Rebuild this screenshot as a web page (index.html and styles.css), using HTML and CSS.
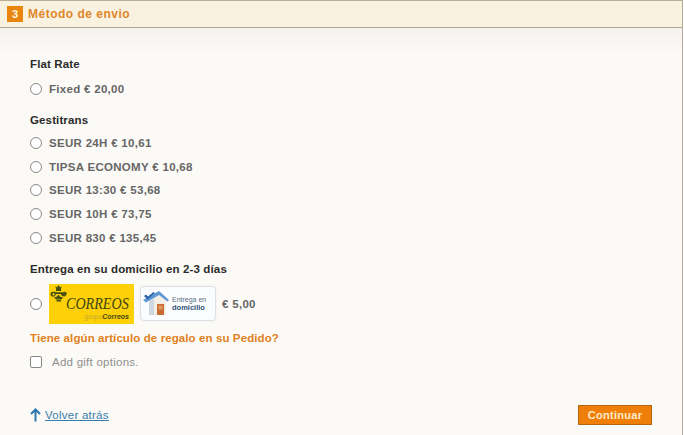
FILE: index.html
```html
<!DOCTYPE html>
<html lang="es">
<head>
<meta charset="utf-8">
<title>Método de envío</title>
<link rel="stylesheet" href="styles.css">
</head>
<body>
<section class="panel">
  <header class="step-head">
    <span class="step-num">3</span>
    <h2 class="step-title">Método de envio</h2>
  </header>
  <div class="step-body">
    <h3 class="carrier first">Flat Rate</h3>
    <label class="rate"><span class="radio"></span>Fixed € 20,00</label>
    <h3 class="carrier second">Gestitrans</h3>
    <div class="rate-list">
      <label class="rate"><span class="radio"></span>SEUR 24H € 10,61</label>
      <label class="rate"><span class="radio"></span>TIPSA ECONOMY € 10,68</label>
      <label class="rate"><span class="radio"></span>SEUR 13:30 € 53,68</label>
      <label class="rate"><span class="radio"></span>SEUR 10H € 73,75</label>
      <label class="rate"><span class="radio"></span>SEUR 830 € 135,45</label>
    </div>
    <h3 class="carrier third">Entrega en su domicilio en 2-3 días</h3>
    <label class="rate logo-rate">
      <span class="radio"></span>
      <span class="correos">
        <svg class="crown" width="18" height="17" viewBox="0 0 18 17" aria-hidden="true">
          <g fill="#47500f">
            <path d="M6 3.500 5.200 1.500 7 2.300 8.500 0l1.500 2.300 1.800-.8L11 3.500v2.500H6z"/>
            <path d="M8 10c-.9 2-3 2.600-4.400 1.600L6 14.500h5.500l1.800-2.500c-1.900.6-3.600-.1-4.300-2z"/>
            <path d="M3.300 6.800C1.500 6.800.3 8 .5 9.500c.2 1.500 1.500 2.400 3 2.100 1.300-.2 2.300-1.200 2.500-2.500h4.800c.6 1.700 2.400 2.800 4.100 2.100 1.500-.6 2.300-2.200 1.500-3.600-.7-1.100-2.100-1.100-3-.4H6C5.500 7.100 4.400 6.700 3.300 6.800zM3.500 8.300c.8 0 1.300.5 1.200 1.200-.1.600-.7 1-1.300.9-.7-.1-1.200-.6-1.100-1.200.1-.5.600-.9 1.200-.9z" fill-rule="evenodd"/>
            <path d="M6.500 15h4.500v1.500H6.500z"/>
          </g>
        </svg>
        <span class="correos-name">CORREOS</span>
        <span class="correos-group"><span class="grupo">grupo</span><b>Correos</b></span>
      </span>
      <span class="home-card">
        <svg width="26" height="25" viewBox="0 0 26 25" aria-hidden="true">
          <path d="M6 9 16 2l7 7v15H6z" fill="#f4efe6"/>
          <path d="M6 10l5-2v16H6z" fill="#cfd8e0"/>
          <path d="M14 13h7v11h-7z" fill="#c96a33"/>
          <path d="M15.500 14.500h4v4h-4z" fill="#e09a68"/>
          <path d="M0 9 16 0l10 9-1.500 1.500L16 4 3 11.500z" fill="#5f97d3"/>
          <path d="M1 5l3.500 3.500L12 2l-1.500-1L5 5.500 3 3.500z" fill="#2b64ad"/>
        </svg>
        <span class="home-text"><span class="home-top">Entrega en</span><b class="home-bottom">domicilio</b></span>
      </span>
      <span class="logo-price">€ 5,00</span>
    </label>
    <h3 class="gift-title">Tiene algún artículo de regalo en su Pedido?</h3>
    <label class="gift"><span class="check"></span>Add gift options.</label>
    <footer class="actions">
      <a class="back" href="#">
        <svg width="11" height="14" viewBox="0 0 11 14" aria-hidden="true"><path d="M5.500 13.500V2M1 6l4.500-4.500L10 6" fill="none" stroke="#2a7ab0" stroke-width="2"/></svg>
        <span class="back-text">Volver atrás</span>
      </a>
      <button class="continue" type="button">Continuar</button>
    </footer>
  </div>
</section>
</body>
</html>
```
FILE: styles.css
```css
html, body { margin: 0; padding: 0; background: #fff; }
body { width: 684px; height: 435px; overflow: hidden; font-family: "Liberation Sans", Arial, sans-serif; }
.panel { width: 682px; height: 435px; border-right: 1px solid #b5ac98; background: #fbfaf6; }
.step-head {
  height: 26px;
  display: flex; align-items: center; gap: 5px; padding-left: 7px;
  border-top: 1px solid #b9ae97; border-bottom: 1px solid #b0a68f;
  background: #f9f2e1;
}
.step-num { width: 16px; height: 16px; background: #e8860f; color: #fff6e4; font-size: 11px; font-weight: 700; text-align: center; line-height: 16px; }
.step-title { margin: 0; color: #e0862a; font-size: 12px; font-weight: 700; letter-spacing: .5px; }
.step-body {
  height: 407px; padding: 30px 30px 0; box-sizing: border-box;
  background: linear-gradient(#f3f2ee 0, #fbfaf6 26px);
  display: flex; flex-direction: column;
}
.carrier { margin: 0; font-size: 11.500px; line-height: 13px; font-weight: 700; color: #2b2b2b; letter-spacing: .13px; }
.second { margin-top: 19px; }
.third { margin-top: 19px; }
.rate { display: flex; align-items: center; height: 13px; color: #666; font-size: 11.500px; font-weight: 700; letter-spacing: .3px; }
.first + .rate { margin-top: 11px; }
.rate-list { display: flex; flex-direction: column; gap: 10.750px; margin-top: 9.300px; }
.radio { flex: none; width: 10px; height: 10px; margin-right: 7px; border: 1px solid #888; border-radius: 50%; background: #fff; }
.logo-rate { height: 40px; margin-top: 7.700px; }
.logo-rate .radio { margin-right: 7px; }
.correos { flex: none; position: relative; width: 85px; height: 40px; background: #fdd007; overflow: hidden; }
.crown { position: absolute; left: 1px; top: 1px; }
.correos-name { position: absolute; left: 17px; top: 10px; font-family: "Liberation Serif", serif; font-style: italic; font-weight: 400; font-size: 17px; line-height: 20px; letter-spacing: 0; color: #3b4412; transform: scaleX(.83); transform-origin: left center; }
.correos-group { position: absolute; right: 5px; bottom: 3px; font-size: 7px; line-height: 8px; letter-spacing: 0; font-weight: 400; color: #c9a92e; }
.correos-group b { color: #47450f; font-style: italic; }
.home-card { flex: none; display: flex; align-items: center; gap: 3px; box-sizing: border-box; width: 76px; height: 35px; margin-left: 6px; padding-left: 2px; border: 1px solid #dde1e7; border-radius: 4px; background: #fbfcfd; box-shadow: 0 0 2px #e6e6e6; }
.home-text { display: flex; flex-direction: column; font-size: 7px; line-height: 8px; letter-spacing: 0; color: #5d7288; font-weight: 400; }
.home-bottom { color: #2f5478; font-size: 7.500px; }
.logo-price { margin-left: 6px; }
.gift-title { margin: 8px 0 0; color: #e08020; font-size: 11.500px; line-height: 13px; font-weight: 700; letter-spacing: .1px; }
.gift { display: flex; align-items: center; margin-top: 11px; height: 13px; color: #8f8f8f; font-size: 11.500px; letter-spacing: .25px; }
.check { flex: none; width: 10px; height: 10px; margin-right: 10px; border: 1px solid #888; border-radius: 2px; background: #fff; }
.actions { display: flex; align-items: center; justify-content: space-between; margin-top: 36px; }
.back { display: flex; align-items: center; gap: 4px; font-size: 11.500px; letter-spacing: .25px; color: #3a7cab; }
.back-text { text-decoration: underline; }
.continue { width: 74px; height: 20px; padding: 0; border: 1px solid #b8650f; background: #f07f09; color: #fdebc8; font-family: inherit; font-size: 11px; font-weight: 700; letter-spacing: .3px; }
```
